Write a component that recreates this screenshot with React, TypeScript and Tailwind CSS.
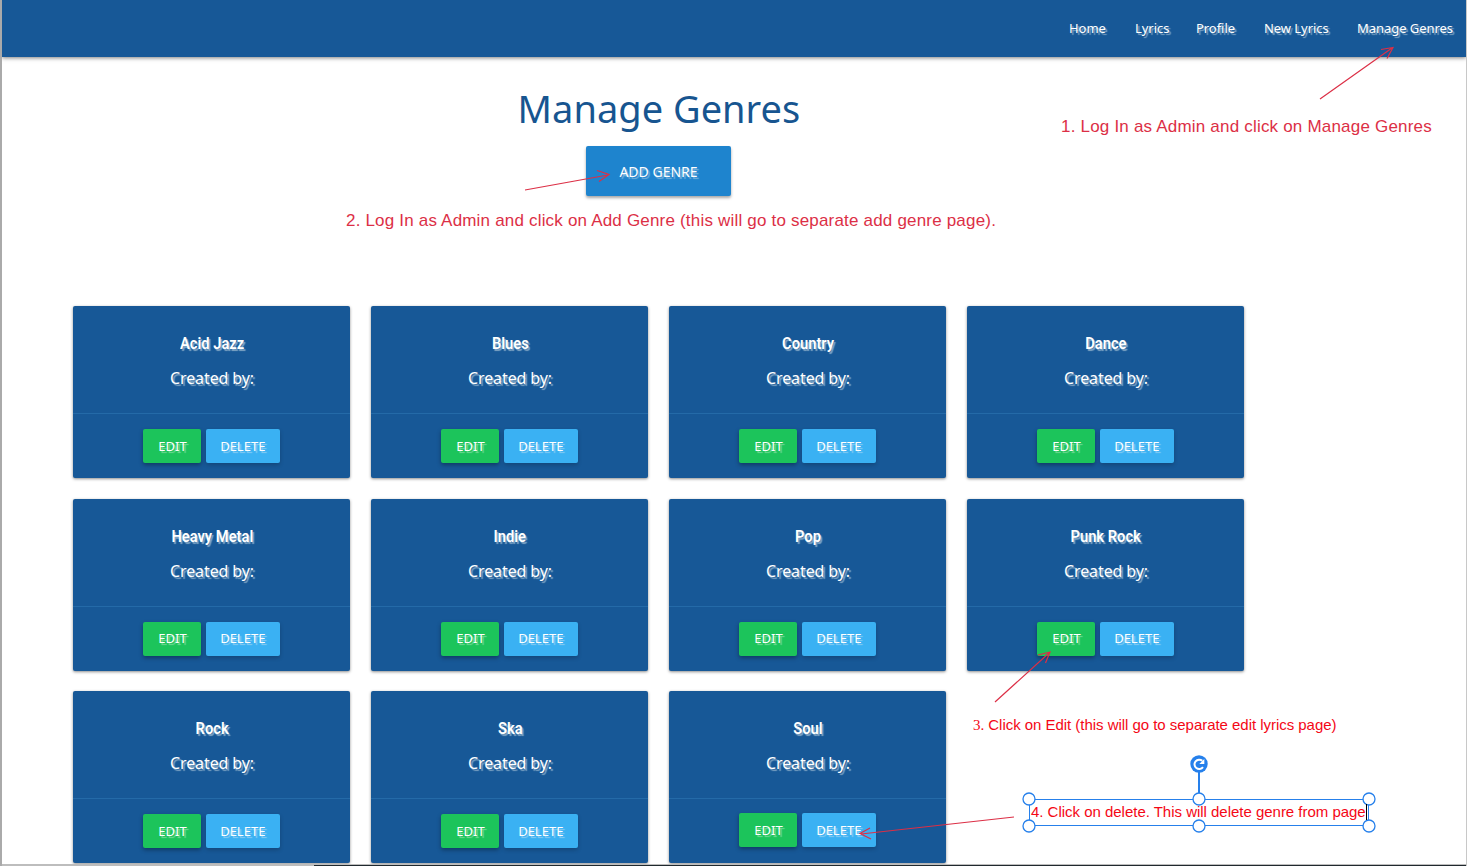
const genres = [
  'Acid Jazz', 'Blues', 'Country', 'Dance',
  'Heavy Metal', 'Indie', 'Pop', 'Punk Rock',
  'Rock', 'Ska', 'Soul',
];

const links = [
  { label: 'Home', width: 'w-[39px]' },
  { label: 'Lyrics', width: 'w-[34px]' },
  { label: 'Profile', width: 'w-[41px]' },
  { label: 'New Lyrics', width: 'w-[66px]' },
  { label: 'Manage Genres', width: 'w-[98px]' },
];

function GenreCard({ name, raised }: { name: string; raised: boolean }) {
  return (
    <article className="flex h-[172px] flex-col rounded-[2px] bg-[#175897] text-center text-white shadow-[0_1px_3px_rgba(0,0,0,0.45)]">
      <div className="flex h-[107px] flex-col items-center pt-[25px] pl-px [text-shadow:2px_2px_1px_#7fa5c5]">
        <h2 className="h-6 scale-x-[0.865] font-[Roboto] text-[17px] leading-6 font-semibold whitespace-nowrap">{name}</h2>
        <p className="mt-[11px] h-6 text-[16px] leading-6 tracking-[-0.1px]">Created by:</p>
      </div>
      <div className={`flex h-[65px] justify-center gap-[4.5px] border-t border-[#246aa8] text-[13px] ${raised ? 'pt-[14px]' : 'pt-[15px]'}`}>
        <button className="h-[34px] w-[58px] rounded-[2px] bg-[#1cc45b] pt-px pl-px shadow-[0_2px_4px_rgba(0,0,0,0.35)] [text-shadow:2px_2px_1px_#75d996]">EDIT</button>
        <button className="h-[34px] w-[74.5px] rounded-[2px] bg-[#3ab1f3] pt-px shadow-[0_2px_4px_rgba(0,0,0,0.2)] [text-shadow:2px_2px_1px_#8bcdf2]">DELETE</button>
      </div>
    </article>
  );
}

function Annotations() {
  return (
    <svg className="pointer-events-none absolute inset-0 h-[866px] w-[1467px]" fill="none">
      <g stroke="#dc2f46" strokeWidth="1.2">
        <path d="M1320 99L1392 48M1381 49.5L1393 47.5L1387 58.5" />
        <path d="M525 190L608 175M597 170.5L609 174.5L599 181.5" />
        <path d="M995 702L1049 653M1038 655L1050 652L1045.500 663" />
        <path d="M1014 817L861 834M870 828L860 833.500L871 839" />
      </g>
      <g stroke="#2680eb">
        <path d="M1029 799.500H1369M1029 825.500H1369M1029.500 799V826M1368.500 799V826" />
        <path d="M1199 772V799" strokeWidth="2" />
        <g fill="white" strokeWidth="1.300">
          <circle cx="1029" cy="799" r="6" />
          <circle cx="1199" cy="799" r="6" />
          <circle cx="1369" cy="799" r="6" />
          <circle cx="1029" cy="826" r="6" />
          <circle cx="1199" cy="826" r="6" />
          <circle cx="1369" cy="826" r="6" />
        </g>
      </g>
      <path d="M1366.500 804V820" stroke="black" />
      <circle cx="1199" cy="764" r="8.700" fill="#2680eb" />
      <path d="M1203 767.200A4.700 4.700 0 1 1 1202.300 760.800" stroke="white" strokeWidth="2" />
      <path d="M1204.300 759V764H1199.300Z" fill="white" />
    </svg>
  );
}

export default function App() {
  return (
    <div className="relative h-[866px] w-[1467px] overflow-hidden border-r border-l-2 border-r-[#c8c8c8] border-l-[#aaa] bg-white font-['Noto_Sans',sans-serif]">
      <nav className="flex h-[57px] items-center justify-end gap-[27px] bg-[#175897] pr-[11px] text-[13px] text-white shadow-[0_1px_4px_rgba(0,0,0,0.5)] [text-shadow:2px_2px_1px_#7fa5c5]">
        {links.map(({ label, width }) => (
          <a key={label} className={`${width} tracking-[-0.05px] whitespace-nowrap`}>{label}</a>
        ))}
      </nav>
      <header className="flex h-[249px] w-[1313px] flex-col items-center pt-[24px]">
        <h1 className="h-[54px] scale-x-[0.975] text-[39px] leading-[54px] text-[#175590]">Manage Genres</h1>
        <button className="mt-[11px] h-[50px] w-[145px] rounded-[2px] bg-[#1e84ce] text-[14px] text-white shadow-[0_2px_3px_rgba(0,0,0,0.35)] [text-shadow:2px_2px_1px_#78b2da]">ADD GENRE</button>
      </header>
      <main className="ml-[71px] grid w-[1171px] grid-cols-4 gap-x-[21px] gap-y-[20.5px]">
        {genres.map((name) => <GenreCard key={name} name={name} raised={name === 'Soul'} />)}
      </main>
      <div className="absolute inset-0 font-['Liberation_Sans',sans-serif] whitespace-nowrap">
        <p className="absolute top-[115px] left-[1059px] text-[17px] leading-6 tracking-[0.2px] text-[#dc2f46]">1. Log In as Admin and click on Manage Genres</p>
        <p className="absolute top-[209px] left-[344px] text-[17px] leading-6 tracking-[0.19px] text-[#dc2f46]">2. Log In as Admin and click on Add Genre (this will go to separate add genre page).</p>
        <p className="absolute top-[713px] left-[971px] text-[15px] leading-6 tracking-[-0.035px] text-[#f40716]"><span className="font-['Liberation_Serif',serif]">3.</span> Click on Edit (this will go to separate edit lyrics page)</p>
        <p className="absolute top-[800px] left-[1029px] text-[15px] leading-6 tracking-[-0.02px] text-[#f40716]">4. Click on delete. This will delete genre from page</p>
      </div>
      <div className="absolute top-0 -left-[2px]"><Annotations /></div>
      <div className="absolute bottom-0 left-0 flex h-[2px] w-full flex-col items-end bg-[#bdbdbd]">
        <div className="mt-px h-px w-[1152px] bg-[#20292e]" />
      </div>
    </div>
  );
}
